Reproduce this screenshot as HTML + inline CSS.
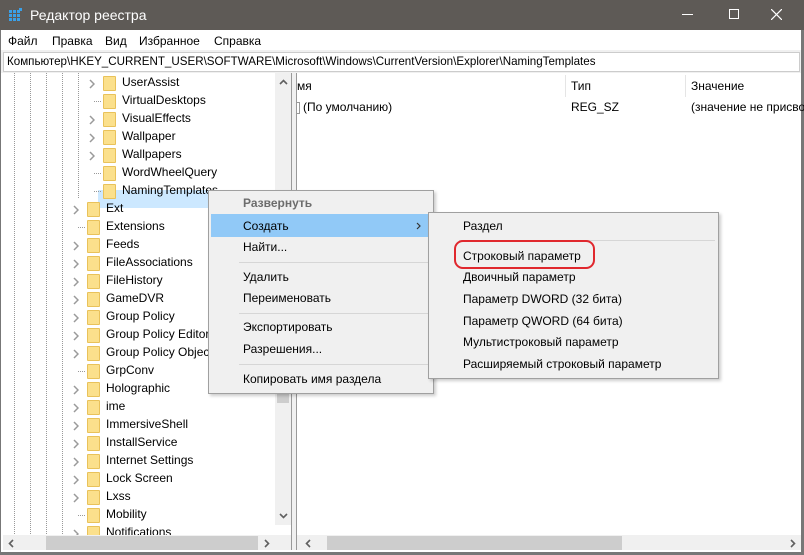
<!DOCTYPE html>
<html><head><meta charset="utf-8"><style>
*{margin:0;padding:0;box-sizing:border-box}
body{width:804px;height:555px;overflow:hidden;background:#fff;font-family:"Liberation Sans","Noto Sans CJK SC",sans-serif;font-size:12px;color:#000;position:relative}
.a{position:absolute;white-space:nowrap}
.f{position:absolute;width:13px;height:15px;background:#fbe08c;border:1px solid #e9c25a;border-radius:1px}
.ch{position:absolute}
.dv{position:absolute;top:73px;height:465px;border-left:1px dotted #999}
.sep{position:absolute;height:1px;background:#d6d6d6}
</style></head><body>
<div class="a" style="left:0;top:0;width:804px;height:30px;background:#5e5a56"></div>
<svg class="a" style="left:9px;top:8px" width="14" height="14"><g fill="#3aa0e8"><rect x="0" y="2" width="3" height="3"/><rect x="4" y="2" width="3" height="3"/><rect x="8" y="2" width="3" height="3"/><rect x="0" y="6" width="3" height="3"/><rect x="4" y="6" width="3" height="3"/><rect x="8" y="6" width="3" height="3"/><rect x="0" y="10" width="3" height="3"/><rect x="4" y="10" width="3" height="3"/><rect x="8" y="10" width="3" height="3"/><rect x="10" y="0" width="3" height="3"/></g></svg>
<div class="a" style="left:30px;top:7px;color:#fff;font-size:14px">Редактор реестра</div>
<div class="a" style="left:682px;top:14px;width:11px;height:1px;background:#fff"></div>
<div class="a" style="left:729px;top:9px;width:10px;height:10px;border:1px solid #fff"></div>
<svg class="a" style="left:771px;top:9px" width="11" height="11"><path d="M0 0L11 11M11 0L0 11" stroke="#fff" stroke-width="1.2"/></svg>
<div class="a" style="left:0;top:30px;width:1px;height:525px;background:#777"></div>
<div class="a" style="left:801px;top:30px;width:3px;height:525px;background:#777"></div>
<div class="a" style="left:0;top:552px;width:804px;height:3px;background:#777"></div>
<div class="a" style="left:8px;top:34px">Файл</div>
<div class="a" style="left:52px;top:34px">Правка</div>
<div class="a" style="left:105px;top:34px">Вид</div>
<div class="a" style="left:139px;top:34px">Избранное</div>
<div class="a" style="left:214px;top:34px">Справка</div>
<div class="a" style="left:1px;top:50px;width:800px;height:23px;background:#f0f0f0"></div>
<div class="a" style="left:3px;top:52px;width:797px;height:20px;background:#fff;border:1px solid #ccc"></div>
<div class="a" style="left:7px;top:55px;font-size:11.6px">Компьютер\HKEY_CURRENT_USER\SOFTWARE\Microsoft\Windows\CurrentVersion\Explorer\NamingTemplates</div>
<!-- tree -->
<div class="a" style="left:3px;top:73px;width:288px;height:477px;background:#fff"></div>
<div class="dv" style="left:14px"></div><div class="dv" style="left:30px"></div><div class="dv" style="left:46px"></div><div class="dv" style="left:62px"></div>
<div class="a" style="left:78px;top:73px;height:125px;border-left:1px dotted #999"></div>
<div class="a" style="left:98px;top:190px;width:120px;height:18px;background:#cce8ff"></div>
<div id="tree"></div>
<div class="a" style="left:275px;top:73px;width:16px;height:452px;background:#f0f0f0"></div>
<div class="a" style="left:277px;top:385px;width:12px;height:18px;background:#cdcdcd"></div>
<svg class="a" style="left:279px;top:79px" width="9" height="6"><path d="M1 5L4.5 1.5L8 5" stroke="#606060" stroke-width="1.6" fill="none"/></svg>
<svg class="a" style="left:279px;top:513px" width="9" height="6"><path d="M1 1L4.5 4.5L8 1" stroke="#606060" stroke-width="1.6" fill="none"/></svg>
<div class="a" style="left:3px;top:535px;width:288px;height:15px;background:#f0f0f0"></div>
<div class="a" style="left:46px;top:536px;width:212px;height:14px;background:#cdcdcd"></div>
<svg class="a" style="left:8px;top:539px" width="6" height="9"><path d="M5 1L1.5 4.5L5 8" stroke="#606060" stroke-width="1.6" fill="none"/></svg>
<svg class="a" style="left:264px;top:539px" width="6" height="9"><path d="M1 1L4.5 4.5L1 8" stroke="#606060" stroke-width="1.6" fill="none"/></svg>
<div class="a" style="left:291px;top:73px;width:6px;height:477px;background:#f0f0f0;border-left:1px solid #999;border-right:1px solid #999"></div>
<!-- right -->
<div class="a" style="left:297px;top:73px;width:504px;height:477px;background:#fff"></div>
<div class="a" style="left:297px;top:79px">мя</div>
<div class="a" style="left:565px;top:75px;width:1px;height:22px;background:#e5e5e5"></div>
<div class="a" style="left:685px;top:75px;width:1px;height:22px;background:#e5e5e5"></div>
<div class="a" style="left:571px;top:79px">Тип</div>
<div class="a" style="left:691px;top:79px">Значение</div>
<div class="a" style="left:297px;top:102px;width:3px;height:12px;border:1px solid #999;border-left:none"></div>
<div class="a" style="left:303px;top:100px">(По умолчанию)</div>
<div class="a" style="left:571px;top:100px">REG_SZ</div>
<div class="a" style="left:691px;top:100px">(значение не присво</div>
<div class="a" style="left:297px;top:535px;width:504px;height:15px;background:#f0f0f0"></div>
<div class="a" style="left:327px;top:536px;width:295px;height:14px;background:#cdcdcd"></div>
<svg class="a" style="left:305px;top:539px" width="6" height="9"><path d="M5 1L1.5 4.5L5 8" stroke="#606060" stroke-width="1.6" fill="none"/></svg>
<svg class="a" style="left:790px;top:539px" width="6" height="9"><path d="M1 1L4.5 4.5L1 8" stroke="#606060" stroke-width="1.6" fill="none"/></svg>
<!-- context menu -->
<div class="a" style="left:208px;top:190px;width:226px;height:204px;background:#f0f0f0;border:1px solid #a0a0a0;box-shadow:2px 2px 3px rgba(0,0,0,.2)"></div>
<div class="a" style="left:211px;top:214px;width:217px;height:23px;background:#91c9f7"></div>
<div class="a" style="left:243px;top:196px;color:#6d6d6d;font-weight:bold">Развернуть</div>
<div class="a" style="left:243px;top:219px">Создать</div>
<svg class="a" style="left:416px;top:222px" width="5" height="8"><path d="M1 1L4 4L1 7" stroke="#333" stroke-width="1.2" fill="none"/></svg>
<div class="a" style="left:243px;top:240px">Найти...</div>
<div class="sep" style="left:239px;top:262px;width:190px"></div>
<div class="a" style="left:243px;top:270px">Удалить</div>
<div class="a" style="left:243px;top:291px">Переименовать</div>
<div class="sep" style="left:239px;top:313px;width:190px"></div>
<div class="a" style="left:243px;top:320px">Экспортировать</div>
<div class="a" style="left:243px;top:342px">Разрешения...</div>
<div class="sep" style="left:239px;top:364px;width:190px"></div>
<div class="a" style="left:243px;top:372px">Копировать имя раздела</div>
<!-- submenu -->
<div class="a" style="left:428px;top:212px;width:291px;height:167px;background:#f0f0f0;border:1px solid #a0a0a0;box-shadow:2px 2px 3px rgba(0,0,0,.2)"></div>
<div class="a" style="left:463px;top:219px">Раздел</div>
<div class="sep" style="left:459px;top:240px;width:256px"></div>
<div class="a" style="left:463px;top:249px">Строковый параметр</div>
<div class="a" style="left:454px;top:240px;width:141px;height:29px;border:2px solid #e0282e;border-radius:9px"></div>
<div class="a" style="left:463px;top:270px">Двоичный параметр</div>
<div class="a" style="left:463px;top:292px">Параметр DWORD (32 бита)</div>
<div class="a" style="left:463px;top:314px">Параметр QWORD (64 бита)</div>
<div class="a" style="left:463px;top:335px">Мультистроковый параметр</div>
<div class="a" style="left:463px;top:357px">Расширяемый строковый параметр</div>
<script>
var rows=[["UserAssist",1,1],["VirtualDesktops",1,0],["VisualEffects",1,1],["Wallpaper",1,1],["Wallpapers",1,1],["WordWheelQuery",1,0],["NamingTemplates",1,0],["Ext",0,1],["Extensions",0,0],["Feeds",0,1],["FileAssociations",0,1],["FileHistory",0,1],["GameDVR",0,1],["Group Policy",0,1],["Group Policy Editor",0,1],["Group Policy Objec",0,1],["GrpConv",0,0],["Holographic",0,1],["ime",0,1],["ImmersiveShell",0,1],["InstallService",0,1],["Internet Settings",0,1],["Lock Screen",0,1],["Lxss",0,1],["Mobility",0,0],["Notifications",0,1]];
var h="";rows.forEach(function(r,i){var y=75+i*18,x=r[1]?103:87;
h+='<div class="f" style="left:'+x+'px;top:'+(y+1)+'px"></div>';
h+='<div class="a" style="left:'+(x+19)+'px;top:'+y+'px">'+r[0]+'</div>';
if(r[2])h+='<svg class="ch" style="left:'+(x-14)+'px;top:'+(y+4)+'px" width="6" height="10"><path d="M1 1L5 5L1 9" stroke="#9a9a9a" stroke-width="1.5" fill="none"/></svg>';
else h+='<div class="a" style="left:'+(x-9)+'px;top:'+(y+8)+'px;width:7px;border-top:1px dotted #999"></div>';});
document.getElementById("tree").outerHTML=h;
</script>
</body></html>
